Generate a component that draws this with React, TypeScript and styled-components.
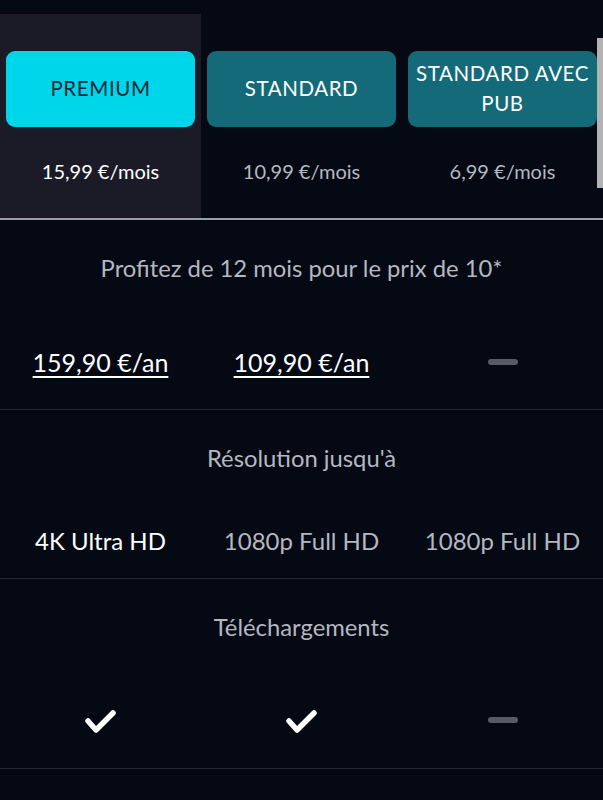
import React from "react";
import styled, { createGlobalStyle } from "styled-components";

const Global = createGlobalStyle`
  html, body { margin: 0; padding: 0; background: #050914; }
  body { font-family: Lato, "Open Sans", sans-serif; -webkit-font-smoothing: antialiased; }
  * { box-sizing: border-box; }
`;

const Page = styled.div`
  width: 603px;
  height: 800px;
  background: #050914;
  overflow: hidden;
  position: relative;
`;

const Header = styled.div`
  margin-top: 14px;
  display: grid;
  grid-template-columns: 201px 201px 201px;
  border-bottom: 2px solid #9a9ea8;
`;

const PlanCol = styled.div<{ $active?: boolean }>`
  height: 204px;
  padding: 37px 6px 0;
  background: ${(p) => (p.$active ? "#1a1b27" : "transparent")};
  display: flex;
  flex-direction: column;
  align-items: stretch;
`;

const PlanButton = styled.div<{ $active?: boolean }>`
  height: 76px;
  border-radius: 9px;
  background: ${(p) => (p.$active ? "#00d6e9" : "#146a78")};
  color: ${(p) => (p.$active ? "#0c2837" : "#ffffff")};
  display: flex;
  align-items: center;
  justify-content: center;
  text-align: center;
  font-size: 20.5px;
  line-height: 30px;
  letter-spacing: 0.6px;
  padding: 0 4px 3px;
`;

const MonthPrice = styled.div<{ $active?: boolean }>`
  margin-top: 31px;
  text-align: center;
  font-size: 20px;
  line-height: 26px;
  color: ${(p) => (p.$active ? "#ffffff" : "#b4b8c0")};
`;

const Scrollbar = styled.div`
  position: absolute;
  right: 0;
  top: 38px;
  width: 6px;
  height: 150px;
  background: #b3b3b3;
`;

const Section = styled.div`
  border-bottom: 1px solid #252833;
`;

const SectionTitle = styled.div`
  padding-top: 35px;
  text-align: center;
  font-size: 23.8px;
  line-height: 26px;
  color: #b4b8c0;
`;

const ValueRow = styled.div<{ $top: number; $bottom: number }>`
  display: grid;
  grid-template-columns: 201px 201px 201px;
  padding-top: ${(p) => p.$top}px;
  padding-bottom: ${(p) => p.$bottom}px;
`;

const Cell = styled.div`
  height: 30px;
  display: flex;
  align-items: center;
  justify-content: center;
`;

const LinkPrice = styled.span`
  font-size: 25px;
  line-height: 30px;
  color: #ffffff;
  text-decoration: underline;
  text-underline-offset: 4px;
  text-decoration-thickness: 1.5px;
`;

const ValueText = styled.span<{ $strong?: boolean }>`
  font-size: 24px;
  line-height: 30px;
  color: ${(p) => (p.$strong ? "#ffffff" : "#b4b8c0")};
`;

const Dash = styled.div`
  width: 30px;
  height: 6px;
  border-radius: 3px;
  background: #585b66;
`;

const Check = () => (
  <svg width="36" height="32" viewBox="0 0 36 32">
    <polyline
      points="5,17 13,26 30,9"
      fill="none"
      stroke="#ffffff"
      strokeWidth="5.5"
      strokeLinecap="round"
      strokeLinejoin="round"
    />
  </svg>
);

export default function App() {
  return (
    <Page>
      <Global />
      <Header>
        <PlanCol $active>
          <PlanButton $active>PREMIUM</PlanButton>
          <MonthPrice $active>15,99 €/mois</MonthPrice>
        </PlanCol>
        <PlanCol>
          <PlanButton>STANDARD</PlanButton>
          <MonthPrice>10,99 €/mois</MonthPrice>
        </PlanCol>
        <PlanCol>
          <PlanButton>
            STANDARD AVEC
            <br />
            PUB
          </PlanButton>
          <MonthPrice>6,99 €/mois</MonthPrice>
        </PlanCol>
      </Header>
      <Scrollbar />

      <Section>
        <SectionTitle>Profitez de 12 mois pour le prix de 10*</SectionTitle>
        <ValueRow $top={66} $bottom={32}>
          <Cell>
            <LinkPrice>159,90 €/an</LinkPrice>
          </Cell>
          <Cell>
            <LinkPrice>109,90 €/an</LinkPrice>
          </Cell>
          <Cell>
            <Dash />
          </Cell>
        </ValueRow>
      </Section>

      <Section>
        <SectionTitle>Résolution jusqu'à</SectionTitle>
        <ValueRow $top={55} $bottom={22}>
          <Cell>
            <ValueText $strong>4K Ultra HD</ValueText>
          </Cell>
          <Cell>
            <ValueText>1080p Full HD</ValueText>
          </Cell>
          <Cell>
            <ValueText>1080p Full HD</ValueText>
          </Cell>
        </ValueRow>
      </Section>

      <Section>
        <SectionTitle>Téléchargements</SectionTitle>
        <ValueRow $top={65} $bottom={33}>
          <Cell>
            <Check />
          </Cell>
          <Cell>
            <Check />
          </Cell>
          <Cell>
            <Dash />
          </Cell>
        </ValueRow>
      </Section>
    </Page>
  );
}
